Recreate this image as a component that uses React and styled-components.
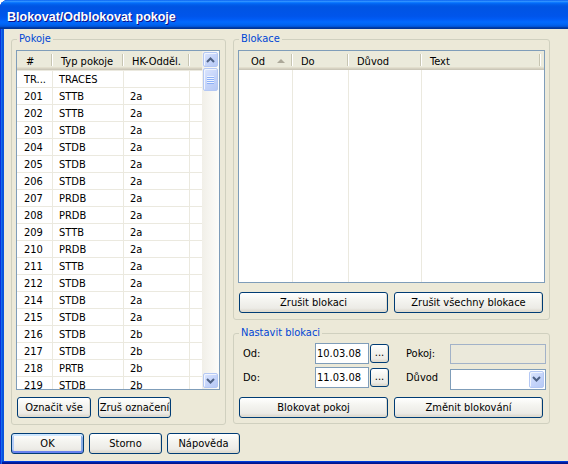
import React from 'react';
import styled, { createGlobalStyle, css } from 'styled-components';

const FONT = '"DejaVu Sans Condensed", "Liberation Sans", Arial, sans-serif';
const TITLE_FONT = '"Liberation Sans", Arial, sans-serif';

const GlobalStyle = createGlobalStyle`
  html, body {
    margin: 0;
    padding: 0;
    background: #ffffff;
  }
  body {
    font-family: ${FONT};
    font-size: 11px;
    color: #000;
  }
  * {
    box-sizing: border-box;
  }
`;

const Window = styled.div`
  width: 568px;
  height: 464px;
  display: flex;
  flex-direction: column;
  border-top-left-radius: 8px;
  overflow: hidden;
  background: #0855dd;
  box-shadow: inset 1px 0 #0831d9, inset 2px 0 #166aee,
    inset 0 -1px #00138c, inset 0 -2px #001ea0, inset 0 -3px #003bda;
`;

const TitleBar = styled.div`
  flex: none;
  height: 29px;
  padding: 4px 0 0 7px;
  display: flex;
  align-items: center;
  color: #fff;
  font: bold 12.5px ${TITLE_FONT};
  text-shadow: 1px 1px #0f1089;
  background: linear-gradient(
    to bottom,
    #0058ee 0%, #3593ff 4%, #288eff 6%, #127dff 8%, #036ffc 10%,
    #0262ee 14%, #0057e5 20%, #0054e3 24%, #0055eb 56%, #005bf5 66%,
    #026afe 76%, #0062ef 86%, #0052d6 92%, #0040ab 94%, #003092 100%
  );
`;

const Body = styled.div`
  flex: 1;
  margin: 0 0 3px 4px;
  background: #ece9d8;
  padding: 4px 0 0 7px;
  display: flex;
  flex-direction: column;
`;

const Panels = styled.div`
  display: flex;
  gap: 7px;
  align-items: flex-start;
`;

const Column = styled.div`
  display: flex;
  flex-direction: column;
  gap: 7px;
`;

const GroupBox = styled.fieldset`
  margin: 0;
  min-inline-size: 0;
  width: ${p => p.$w}px;
  border: 1px solid #d0d0bf;
  border-radius: 3px;
  padding: ${p => p.$pad};
  display: flex;
  flex-direction: column;
`;

const Caption = styled.legend`
  color: #0046d5;
  font-size: 11px;
  line-height: 12px;
  padding: 0 2px;
  margin-left: 1px;
`;

const ListView = styled.div`
  width: ${p => p.$w}px;
  height: ${p => p.$h}px;
  border: 1px solid #7f9db9;
  background: #fff;
  display: flex;
  overflow: hidden;
`;

const ListMain = styled.div`
  flex: 1;
  display: flex;
  flex-direction: column;
  min-width: 0;
`;

const HeaderRow = styled.div`
  flex: none;
  display: grid;
  grid-template-columns: ${p => p.$cols};
  height: 19px;
  background: #ebeadb;
  box-shadow: inset 0 -1px #cbc7b8, inset 0 -2px #d6d2c2, inset 0 -3px #e2decd;
`;

const HeaderCell = styled.div`
  position: relative;
  display: flex;
  align-items: center;
  padding: 1px 0 0 ${p => p.$indent ?? 8}px;
  white-space: nowrap;
  overflow: hidden;

  ${p => !p.$plain && css`
    &::after {
      content: '';
      position: absolute;
      top: 3px;
      bottom: 4px;
      right: 1px;
      width: 1px;
      background: #c7c5b2;
      box-shadow: 1px 0 #fff;
    }
  `}
`;

const SortArrow = styled.span`
  margin-left: 12px;
  margin-top: -1px;
  width: 0;
  height: 0;
  border-left: 4px solid transparent;
  border-right: 4px solid transparent;
  border-bottom: 4px solid #aca899;
`;

const Row = styled.div`
  flex: none;
  display: grid;
  grid-template-columns: ${p => p.$cols};
  height: 17px;
  border-top: 1px solid #ebe9df;
`;

const Cell = styled.div`
  display: flex;
  align-items: center;
  padding-left: ${p => p.$indent ?? 6}px;
  white-space: nowrap;
  overflow: hidden;
  border-right: ${p => (p.$last ? 'none' : '1px solid #ebe9df')};
`;

const GridBody = styled.div`
  flex: 1;
  display: grid;
  grid-template-columns: ${p => p.$cols};
`;

const GridColumn = styled.div`
  border-right: ${p => (p.$last ? 'none' : '1px solid #ebe9df')};
`;

const ScrollBar = styled.div`
  flex: none;
  width: 17px;
  display: flex;
  flex-direction: column;
  align-items: center;
  padding: 1px 0;
  background: linear-gradient(to right, #f1efe8, #fdfdfa);
`;

const ScrollButton = styled.div`
  flex: none;
  width: 15px;
  height: ${p => p.$h ?? 15}px;
  margin-top: ${p => p.$mt ?? 0}px;
  border: 1px solid #b4c8f4;
  border-radius: 2px;
  background: linear-gradient(135deg, #dce6fd 0%, #c6d5fa 50%, #b6c9f5 100%);
  box-shadow: inset 1px 1px #f1f5fe;
  display: flex;
  align-items: center;
  justify-content: center;
`;

const Spacer = styled.div`
  flex: 1;
`;

const Grip = styled.span`
  width: 7px;
  height: 8px;
  background: repeating-linear-gradient(to bottom, #eef4fe 0 1px, #8cb0f8 1px 2px);
`;

const ButtonRow = styled.div`
  display: flex;
  gap: ${p => p.$gap ?? 6}px;
  margin-top: ${p => p.$mt ?? 0}px;
  padding-left: ${p => p.$pl ?? 0}px;
`;

const Button = styled.button`
  flex: none;
  width: ${p => p.$w}px;
  height: ${p => p.$h ?? 21}px;
  margin: 0;
  padding: 0;
  font: 11px ${FONT};
  color: #000;
  white-space: nowrap;
  overflow: visible;
  border: 1px solid #003c74;
  border-radius: 3px;
  background: linear-gradient(to bottom, #ffffff 0%, #f5f5f1 35%, #ecebe6 80%, #d9d4c9 100%);
  box-shadow: inset -1px -1px #e0dccf;
  display: flex;
  align-items: center;
  justify-content: center;

  ${p => p.$default && css`
    box-shadow: inset 0 2px #cee7ff, inset 0 -2px #6982ee,
      inset 2px 0 #b5cdf7, inset -2px 0 #89ade4;
  `}
`;

const DotsButton = styled(Button)`
  margin-left: 1px;
  align-items: flex-end;
  padding-bottom: 3px;
`;

const FieldGrid = styled.div`
  display: grid;
  grid-template-columns: 77px 54px 20px 17px 44px 96px;
  grid-auto-rows: 21px;
  row-gap: 3px;
  align-items: center;
`;

const Label = styled.span`
  padding-left: ${p => p.$pl ?? 0}px;
`;

const TextInput = styled.input`
  width: ${p => p.$w}px;
  height: ${p => p.$h ?? 21}px;
  margin: 0;
  padding: 0 0 0 1px;
  border: 1px solid #7f9db9;
  background: #fff;
  font: 11px ${FONT};
  color: #000;
  outline: none;

  &:disabled {
    border-color: #a2b2c8;
    background: #ebe9db;
  }
`;

const Combo = styled.div`
  width: 96px;
  height: 21px;
  margin-top: 3px;
  border: 1px solid #7f9db9;
  background: #fff;
  padding: 1px;
  display: flex;
  justify-content: flex-end;
`;

const Footer = styled.div`
  display: flex;
  gap: 5px;
  margin-top: 8px;
`;

const Chevron = ({ up }) => (
  <svg width="9" height="6" viewBox="0 0 9 6">
    <path
      d={up ? 'M1 5L4.5 1.5L8 5' : 'M1 1L4.5 4.5L8 1'}
      fill="none"
      stroke="#4d6185"
      strokeWidth="2"
    />
  </svg>
);

const ROOM_COLS = '36px 71px 66px 1fr';
const BLOCK_COLS = '54px 56px 73px 119px 1fr';

const rooms = [
  ['TR...', 'TRACES', ''],
  ['201', 'STTB', '2a'],
  ['202', 'STTB', '2a'],
  ['203', 'STDB', '2a'],
  ['204', 'STDB', '2a'],
  ['205', 'STDB', '2a'],
  ['206', 'STDB', '2a'],
  ['207', 'PRDB', '2a'],
  ['208', 'PRDB', '2a'],
  ['209', 'STTB', '2a'],
  ['210', 'PRDB', '2a'],
  ['211', 'STTB', '2a'],
  ['212', 'STDB', '2a'],
  ['214', 'STDB', '2a'],
  ['215', 'STDB', '2a'],
  ['216', 'STDB', '2b'],
  ['217', 'STDB', '2b'],
  ['218', 'PRTB', '2b'],
  ['219', 'STDB', '2b'],
];

export default function App() {
  return (
    <>
      <GlobalStyle />
      <Window>
        <TitleBar>Blokovat/Odblokovat pokoje</TitleBar>
        <Body>
          <Panels>
            <GroupBox $w={215} $pad="5px 5px 6px 4px">
              <Caption>Pokoje</Caption>
              <ListView $w={204} $h={340}>
                <ListMain>
                  <HeaderRow $cols={ROOM_COLS}>
                    <HeaderCell $indent={9}>#</HeaderCell>
                    <HeaderCell>Typ pokoje</HeaderCell>
                    <HeaderCell>HK-Odděl.</HeaderCell>
                    <HeaderCell $plain />
                  </HeaderRow>
                  {rooms.map(([no, type, hk]) => (
                    <Row key={no} $cols={ROOM_COLS}>
                      <Cell $indent={7}>{no}</Cell>
                      <Cell>{type}</Cell>
                      <Cell>{hk}</Cell>
                      <Cell $last />
                    </Row>
                  ))}
                </ListMain>
                <ScrollBar>
                  <ScrollButton><Chevron up /></ScrollButton>
                  <ScrollButton $h={23} $mt={1}><Grip /></ScrollButton>
                  <Spacer />
                  <ScrollButton><Chevron /></ScrollButton>
                </ScrollBar>
              </ListView>
              <ButtonRow $mt={7} $pl={1} $gap={7}>
                <Button $w={74}>Označit vše</Button>
                <Button $w={73}>Zruš označení</Button>
              </ButtonRow>
            </GroupBox>

            <Column>
              <GroupBox $w={317} $pad="5px 4px 6px 4px">
                <Caption>Blokace</Caption>
                <ListView $w={307} $h={233}>
                  <ListMain>
                    <HeaderRow $cols={BLOCK_COLS}>
                      <HeaderCell $indent={12}>Od<SortArrow /></HeaderCell>
                      <HeaderCell>Do</HeaderCell>
                      <HeaderCell>Důvod</HeaderCell>
                      <HeaderCell>Text</HeaderCell>
                      <HeaderCell $plain />
                    </HeaderRow>
                    <GridBody $cols={BLOCK_COLS}>
                      <GridColumn />
                      <GridColumn />
                      <GridColumn />
                      <GridColumn $last />
                      <GridColumn $last />
                    </GridBody>
                  </ListMain>
                </ListView>
                <ButtonRow $mt={9} $pl={1}>
                  <Button $w={149}>Zrušit blokaci</Button>
                  <Button $w={149}>Zrušit všechny blokace</Button>
                </ButtonRow>
              </GroupBox>

              <GroupBox $w={317} $pad="4px 4px 5px 4px">
                <Caption>Nastavit blokaci</Caption>
                <FieldGrid>
                  <Label $pl={5}>Od:</Label>
                  <TextInput $w={54} defaultValue="10.03.08" />
                  <DotsButton $w={19} $h={19}>...</DotsButton>
                  <span />
                  <Label>Pokoj:</Label>
                  <TextInput $w={96} $h={20} disabled />

                  <Label $pl={5}>Do:</Label>
                  <TextInput $w={54} defaultValue="11.03.08" />
                  <DotsButton $w={19} $h={19}>...</DotsButton>
                  <span />
                  <Label>Důvod</Label>
                  <Combo>
                    <ScrollButton $h={17}><Chevron /></ScrollButton>
                  </Combo>
                </FieldGrid>
                <ButtonRow $mt={9} $pl={1}>
                  <Button $w={149}>Blokovat pokoj</Button>
                  <Button $w={149}>Změnit blokování</Button>
                </ButtonRow>
              </GroupBox>
            </Column>
          </Panels>

          <Footer>
            <Button $w={73} $default>OK</Button>
            <Button $w={73}>Storno</Button>
            <Button $w={73}>Nápověda</Button>
          </Footer>
        </Body>
      </Window>
    </>
  );
}
